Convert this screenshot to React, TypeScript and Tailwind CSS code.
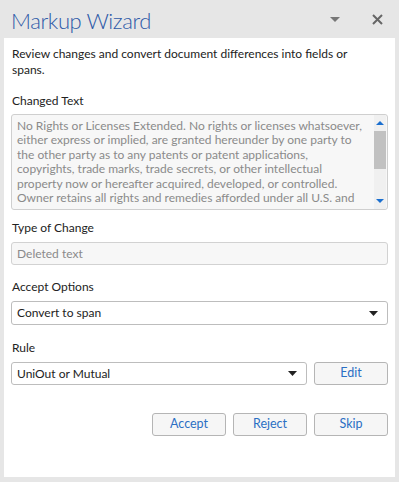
import React from "react";

const lines = [
  "No Rights or Licenses Extended. No rights or licenses whatsoever,",
  "either express or implied, are granted hereunder by one party to",
  "the other party as to any patents or patent applications,",
  "copyrights, trade marks, trade secrets, or other intellectual",
  "property now or hereafter acquired, developed, or controlled.",
  "Owner retains all rights and remedies afforded under all U.S. and",
];

const Caret = () => (
  <svg width="9" height="5" viewBox="0 0 9 5">
    <path d="M0 0h9L4.5 5z" fill="#222" />
  </svg>
);

const Button = ({ label }: { label: string }) => (
  <button className="w-[74px] h-[23px] rounded-[3px] border border-[#b5b5b5] bg-[#f6f6f6] text-[12.5px] text-[#2b6fc4]">
    {label}
  </button>
);

export default function App() {
  return (
    <div
      className="w-[399px] h-[482px] bg-[#e6e6e6] flex flex-col px-[4px] pb-[5px]"
      style={{ fontFamily: 'Lato, "Open Sans", sans-serif' }}
    >
      <div className="h-[38px] flex items-center pl-[7px] pr-[12px]">
        <div className="text-[22px] font-light text-[#2f5aa8] leading-none mt-[3px] tracking-[-0.4px]">
          Markup Wizard
        </div>
        <div className="ml-auto flex items-center gap-[32px] mt-[1px]">
          <svg width="10" height="5" viewBox="0 0 10 5">
            <path d="M0 0h10L5 5z" fill="#777" />
          </svg>
          <svg width="11" height="11" viewBox="0 0 11 11">
            <path d="M1 1l9 9M10 1l-9 9" stroke="#666" strokeWidth="2" />
          </svg>
        </div>
      </div>
      <div className="flex-1 bg-white px-[7px] pt-[8px] text-[12px] text-[#222] flex flex-col">
        <p className="leading-[16px] pl-[1px]">
          Review changes and convert document differences into fields or
          <br />
          spans.
        </p>
        <div className="mt-[15px] leading-[16px] pl-[1px]">Changed Text</div>
        <div className="mt-[5px] h-[96px] border border-[#cfcfcf] rounded-[3px] bg-[#f7f7f7] flex overflow-hidden">
          <div className="flex-1 pl-[5px] pt-[4px] leading-[14.4px] text-[#8a8a8a] overflow-hidden whitespace-nowrap">
            {lines.map((l) => (
              <div key={l}>{l}</div>
            ))}
          </div>
          <div className="w-[12px] flex flex-col bg-[#f0f0f0] mr-[1px]">
            <div className="h-[16px] flex items-center justify-center">
              <svg width="8" height="4" viewBox="0 0 8 4">
                <path d="M0 4h8L4 0z" fill="#1a6fcf" />
              </svg>
            </div>
            <div className="h-[38px] bg-[#c1c1c1]" />
            <div className="flex-1" />
            <div className="h-[16px] flex items-center justify-center">
              <svg width="8" height="4" viewBox="0 0 8 4">
                <path d="M0 0h8L4 4z" fill="#1a6fcf" />
              </svg>
            </div>
          </div>
        </div>
        <div className="mt-[10px] leading-[16px] pl-[1px]">Type of Change</div>
        <div className="mt-[6px] h-[23px] border border-[#d2d2d2] rounded-[3px] bg-[#f7f7f7] flex items-center pl-[5px] text-[#8a8a8a]">
          Deleted text
        </div>
        <div className="mt-[14px] leading-[16px] pl-[1px]">Accept Options</div>
        <div className="mt-[6px] h-[24px] border border-[#bdbdbd] rounded-[3px] bg-white flex items-center pl-[5px] pr-[9px]">
          <span>Convert to span</span>
          <span className="ml-auto">
            <Caret />
          </span>
        </div>
        <div className="mt-[15px] leading-[16px] pl-[1px]">Rule</div>
        <div className="mt-[6px] flex gap-[7px]">
          <div className="flex-1 h-[23px] border border-[#bdbdbd] rounded-[3px] bg-white flex items-center pl-[5px] pr-[9px]">
            <span>UniOut or Mutual</span>
            <span className="ml-auto">
              <Caret />
            </span>
          </div>
          <Button label="Edit" />
        </div>
        <div className="mt-[28px] flex justify-end gap-[7px]">
          <Button label="Accept" />
          <Button label="Reject" />
          <Button label="Skip" />
        </div>
      </div>
    </div>
  );
}
